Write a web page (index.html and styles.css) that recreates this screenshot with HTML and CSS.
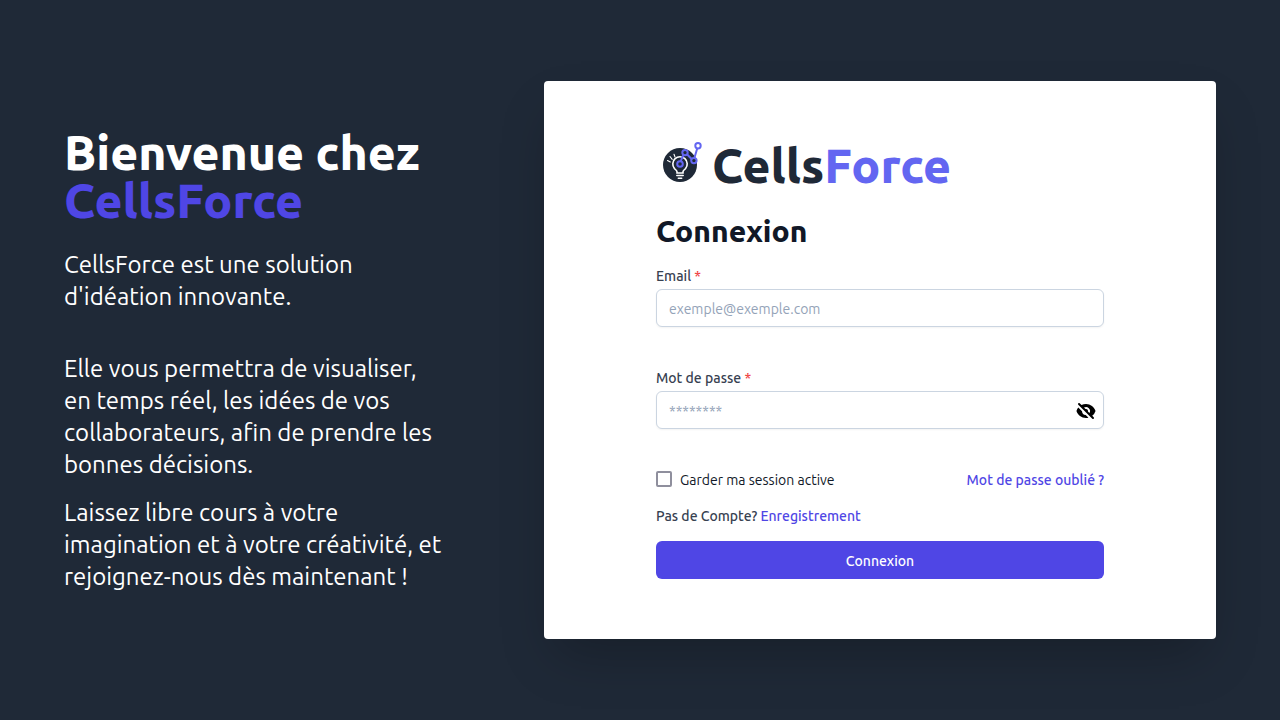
FILE: index.html
```html
<!DOCTYPE html>
<html lang="fr">
<head>
<meta charset="utf-8">
<meta name="viewport" content="width=device-width, initial-scale=1">
<title>CellsForce - Connexion</title>
<link rel="stylesheet" href="styles.css">
</head>
<body>
<main class="page">
  <section class="intro">
    <h1 class="intro-title">Bienvenue chez <span class="intro-brand">CellsForce</span></h1>
    <p class="intro-lead">CellsForce est une solution d'idéation innovante.</p>
    <p class="intro-text">Elle vous permettra de visualiser, en temps réel, les idées de vos collaborateurs, afin de prendre les bonnes décisions.</p>
    <p class="intro-text">Laissez libre cours à votre imagination et à votre créativité, et rejoignez-nous dès maintenant !</p>
  </section>
  <section class="card">
    <div class="logo">
      <svg class="logo-mark" viewBox="0 4 48 48" aria-hidden="true">
        <circle cx="24" cy="28" r="17" fill="#1f2937"/>
        <g fill="none" stroke="#fff" stroke-linecap="round">
          <path d="M21 36v-1.300c0-1.100-1.500-2-2.600-3.200a7.200 7.200 0 1 1 11.200 0c-1.100 1.200-2.600 2.100-2.600 3.200v1.300z" stroke-width="1.600"/>
          <path d="M20.800 38.600h6.400M22.300 41.200h3.400" stroke-width="1.500"/>
          <path d="M11.500 23.500l2.800 1.500M14 19.500l2.200 2.800M18 17.200l1 2.800" stroke-width="1.100"/>
        </g>
        <g fill="none" stroke="#6366f1" stroke-width="2">
          <circle cx="24" cy="27" r="2.800"/>
          <path d="M24.600 24.400l2.800-6.400M31.200 17.500l4.200 4.200M38.400 21l2.800-9.500"/>
          <circle cx="29" cy="15.600" r="2.700" fill="#1f2937"/>
          <circle cx="37.900" cy="23.600" r="2.700" fill="#1f2937"/>
          <circle cx="42" cy="8.800" r="2.700" fill="#fff"/>
        </g>
      </svg>
      <span class="logo-text">Cells<span class="logo-accent">Force</span></span>
    </div>
    <h2 class="card-title">Connexion</h2>
    <form class="form">
      <div class="field">
        <label class="label" for="email">Email <span class="required">*</span></label>
        <input class="input" id="email" type="email" placeholder="exemple@exemple.com">
      </div>
      <div class="field">
        <label class="label" for="password">Mot de passe <span class="required">*</span></label>
        <div class="password">
          <input class="input" id="password" type="password" placeholder="********">
          <button class="toggle" type="button" aria-label="Afficher le mot de passe">
            <svg class="toggle-icon" viewBox="0 0 20 20" aria-hidden="true">
              <path fill-rule="evenodd" clip-rule="evenodd" d="M3.707 2.293a1 1 0 00-1.414 1.414l14 14a1 1 0 001.414-1.414l-1.473-1.473A10.014 10.014 0 0019.542 10C18.268 5.943 14.478 3 10 3a9.958 9.958 0 00-4.512 1.074l-1.780-1.781zm4.261 4.260l1.514 1.515a2.003 2.003 0 012.450 2.450l1.514 1.514a4 4 0 00-5.478-5.478z"/>
              <path d="M12.454 16.697L9.750 13.992a4 4 0 01-3.742-3.741L2.335 6.578A9.980 9.980 0 00.458 10c1.274 4.057 5.065 7 9.542 7 .847 0 1.669-.105 2.454-.303z"/>
            </svg>
          </button>
        </div>
      </div>
      <div class="options">
        <label class="remember"><input class="checkbox" type="checkbox">Garder ma session active</label>
        <a class="link" href="#">Mot de passe oublié ?</a>
      </div>
      <p class="signup">Pas de Compte? <a class="link" href="#">Enregistrement</a></p>
      <button class="submit" type="submit">Connexion</button>
    </form>
  </section>
</main>
</body>
</html>
```
FILE: styles.css
```css
*, *::before, *::after { box-sizing: border-box; }
body {
  margin: 0;
  background: #1f2937;
  color: #111827;
  font-family: Ubuntu, "Noto Sans", sans-serif;
  font-size: 14px;
  line-height: 20px;
}
h1, h2, p { margin: 0; }
button, input { font: inherit; }
.page {
  min-height: 100vh;
  padding: 64px;
  display: grid;
  grid-template-columns: 5fr 7fr;
  align-items: center;
}
.intro { padding-right: 96px; color: #fff; font-size: 24px; line-height: 32px; }
.intro-title, .logo-text, .card-title { font-weight: 800; }
.intro-title { font-size: 48px; line-height: 48px; }
.intro-brand { color: #4f46e5; }
.intro-lead { margin: 25px 0 40px; }
.intro-text + .intro-text { margin-top: 16px; }
.card {
  padding: 56px 112px 60px;
  background: #fff;
  border-radius: 4px;
  box-shadow: 0 25px 50px -12px rgba(0, 0, 0, .25);
}
.logo { display: flex; align-items: center; gap: 8px; height: 56px; }
.logo-mark { width: 48px; height: 48px; }
.logo-text { color: #1f2937; font-size: 48px; line-height: 56px; }
.logo-accent { color: #6366f1; }
.card-title { margin: 20px 0 17px; font-size: 30px; line-height: 36px; }
.form { display: flex; flex-direction: column; }
.field { margin-bottom: 41px; }
.label, .link, .signup, .submit { font-weight: 500; }
.label { display: block; margin-bottom: 3px; color: #374151; }
.required { color: #ef4444; }
.input {
  display: block;
  width: 100%;
  height: 38px;
  padding: 9px 12px 7px;
  border: 1px solid #cbd5e1;
  border-radius: 6px;
  background: #fff;
  box-shadow: 0 1px 2px rgba(0, 0, 0, .05);
}
.input::placeholder { color: #94a3b8; opacity: 1; }
.password { position: relative; }
.toggle { position: absolute; top: 2px; bottom: 0; right: 8px; padding: 0; border: 0; background: none; color: #000; display: flex; align-items: center; }
.toggle-icon { width: 20px; height: 20px; fill: currentColor; }
.options { display: flex; align-items: flex-start; justify-content: space-between; margin-bottom: 16px; }
.remember { display: flex; align-items: flex-start; gap: 8px; }
.checkbox { appearance: none; width: 16px; height: 16px; margin: 1px 0 0; border: 2px solid #8f8f9d; border-radius: 2px; background: #fff; }
.link { color: #4f46e5; text-decoration: none; }
.signup { color: #374151; margin-bottom: 15px; }
.submit { height: 38px; padding: 9px 16px 7px; border: 0; border-radius: 6px; background: #4f46e5; color: #fff; }
```
